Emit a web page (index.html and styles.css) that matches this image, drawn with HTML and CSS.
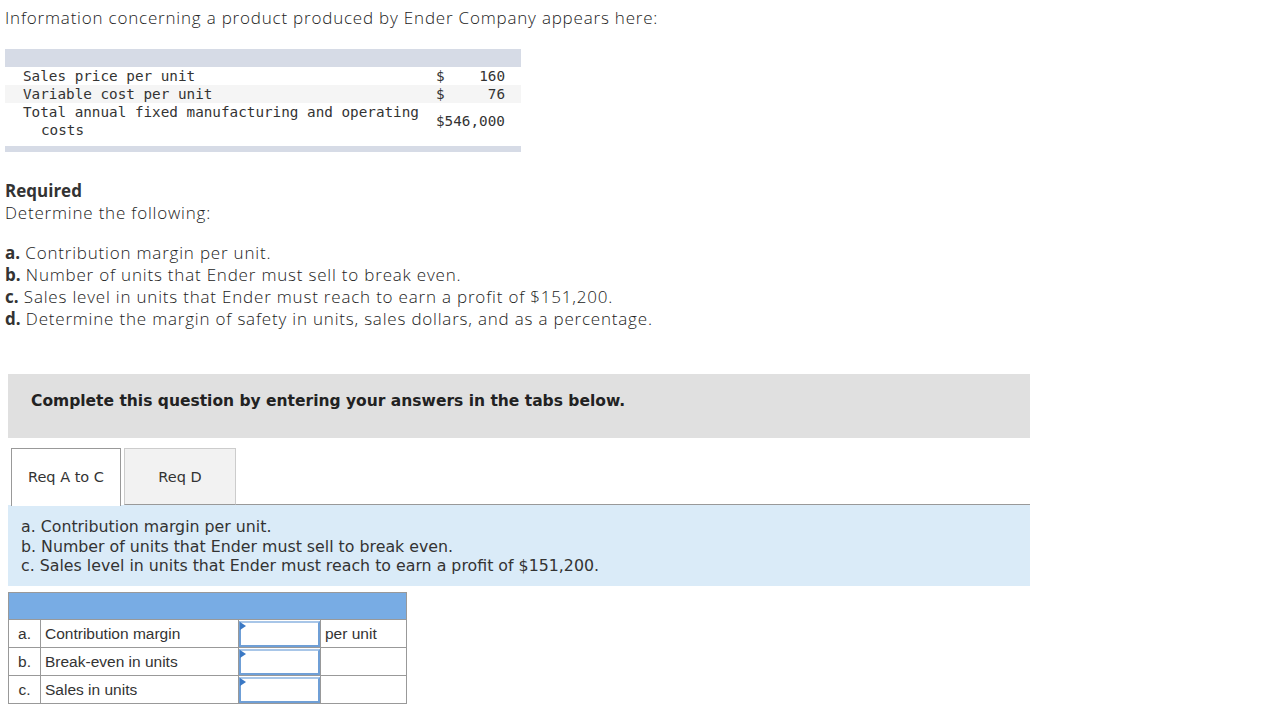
FILE: index.html
```html
<!DOCTYPE html>
<html>
<head>
<meta charset="utf-8">
<link rel="stylesheet" href="styles.css">
</head>
<body>
<p class="intro">Information concerning a product produced by Ender Company appears here:</p>

<div class="data">
  <div class="data-bar"></div>
  <div class="data-row">
    <div class="data-label">Sales price per unit</div>
    <div class="data-val"><span>$</span><span>160</span></div>
  </div>
  <div class="data-row alt">
    <div class="data-label">Variable cost per unit</div>
    <div class="data-val"><span>$</span><span>76</span></div>
  </div>
  <div class="data-row tall">
    <div class="data-label">Total annual fixed manufacturing and operating costs</div>
    <div class="data-val"><span>$546,000</span></div>
  </div>
  <div class="data-bar bottom"></div>
</div>

<div class="required">
  <div class="req-title">Required</div>
  <div>Determine the following:</div>
  <ol class="req-list">
    <li><b>a.</b> Contribution margin per unit.</li>
    <li><b>b.</b> Number of units that Ender must sell to break even.</li>
    <li><b>c.</b> Sales level in units that Ender must reach to earn a profit of $151,200.</li>
    <li><b>d.</b> Determine the margin of safety in units, sales dollars, and as a percentage.</li>
  </ol>
</div>

<div class="complete">Complete this question by entering your answers in the tabs below.</div>

<div class="tabs">
  <div class="tab active">Req A to C</div>
  <div class="tab">Req D</div>
  <div class="tab-rest"></div>
</div>

<div class="panel">
  <div>a. Contribution margin per unit.</div>
  <div>b. Number of units that Ender must sell to break even.</div>
  <div>c. Sales level in units that Ender must reach to earn a profit of $151,200.</div>
</div>

<table class="answers">
  <tr class="head"><td colspan="4"></td></tr>
  <tr>
    <td class="letter">a.</td>
    <td class="label">Contribution margin</td>
    <td class="input"><div class="box"></div></td>
    <td class="unit">per unit</td>
  </tr>
  <tr>
    <td class="letter">b.</td>
    <td class="label">Break-even in units</td>
    <td class="input"><div class="box"></div></td>
    <td class="unit"></td>
  </tr>
  <tr>
    <td class="letter">c.</td>
    <td class="label">Sales in units</td>
    <td class="input"><div class="box"></div></td>
    <td class="unit"></td>
  </tr>
</table>
</body>
</html>
```

FILE: styles.css
```css
body {
  margin: 0;
  font-family: "Open Sans", Lato, sans-serif;
  color: #333;
  background: #fff;
}

.intro {
  margin: 0;
  padding: 7px 0 0 5px;
  font-size: 17px;
  font-weight: 300;
  letter-spacing: 0.8px;
  line-height: 22px;
  color: #222;
}

.data {
  margin: 20px 0 0 5px;
  width: 516px;
  font-family: "DejaVu Sans Mono", "Liberation Mono", monospace;
  font-size: 14.3px;
  color: #333;
}

.data-bar {
  height: 18px;
  background: #d6dbe6;
}

.data-bar.bottom {
  height: 6px;
  margin-top: 7px;
}

.data-row {
  display: flex;
  align-items: center;
  line-height: 18px;
}

.data-row.alt {
  background: #f5f5f5;
}

.data-label {
  flex: 1;
  padding-left: 36px;
  text-indent: -18px;
}

.data-val {
  width: 69px;
  margin-right: 16px;
  display: flex;
  justify-content: space-between;
}

.required {
  margin-top: 28px;
  padding-left: 5px;
  font-size: 17px;
  font-weight: 300;
  letter-spacing: 0.8px;
  line-height: 22px;
  color: #222;
}

.req-title {
  font-weight: bold;
  letter-spacing: 0;
  color: #333;
}

.req-list {
  list-style: none;
  margin: 18px 0 0;
  padding: 0;
}

.req-list b {
  font-weight: 700;
  letter-spacing: 0;
  color: #333;
}

.complete {
  margin: 44px 0 0 8px;
  width: 1022px;
  height: 64px;
  box-sizing: border-box;
  padding: 17px 0 0 23px;
  background: #e0e0e0;
  font-family: "DejaVu Sans", Verdana, sans-serif;
  font-weight: bold;
  font-size: 15.5px;
  line-height: 20px;
  color: #222;
}

.tabs {
  display: flex;
  align-items: flex-end;
  margin: 9px 0 0 8px;
  width: 1022px;
  font-family: "DejaVu Sans", Verdana, sans-serif;
  font-size: 14.5px;
  color: #333;
}

.tab {
  box-sizing: border-box;
  height: 57px;
  width: 112px;
  margin-left: 3px;
  border: 1px solid #ccc;
  background: #f2f2f2;
  display: flex;
  align-items: center;
  justify-content: center;
  border-bottom: 1px solid #999;
}

.tab.active {
  width: 110px;
  height: 58px;
  border: 1px solid #999;
  border-bottom: none;
  background: #fff;
  margin-left: 3px;
  position: relative;
  top: 1px;
  padding-bottom: 1px;
}

.tab-rest {
  flex: 1;
  border-bottom: 1px solid #999;
}

.panel {
  margin-left: 8px;
  width: 1022px;
  box-sizing: border-box;
  padding: 12px 0 0 13px;
  height: 81px;
  background: #daebf8;
  font-family: "DejaVu Sans", Verdana, sans-serif;
  font-size: 15.8px;
  line-height: 19.5px;
  color: #333;
}

.answers {
  margin: 6px 0 0 8px;
  border-collapse: collapse;
  font-family: "Liberation Sans", Arial, sans-serif;
  font-size: 15.5px;
  color: #333;
}

.answers td {
  border: 1px solid #999;
  padding: 0 4px;
  height: 27px;
}

.answers tr.head td {
  background: #78ace4;
  height: 26px;
}

.answers .letter {
  width: 23px;
  text-align: center;
  padding: 0 4px;
}

.answers .label {
  width: 189px;
}

.answers .input {
  width: 81px;
  padding: 0;
}

.answers .unit {
  width: 77px;
}

.box {
  position: relative;
  height: 26px;
  box-sizing: border-box;
  border: 2px solid #6f9fd6;
  border-top-color: #a8c6e8;
  background: #fff;
}

.box::before {
  content: "";
  position: absolute;
  left: -1px;
  top: -1px;
  border-left: 6px solid #3a78c4;
  border-top: 4px solid transparent;
  border-bottom: 4px solid transparent;
}
```
